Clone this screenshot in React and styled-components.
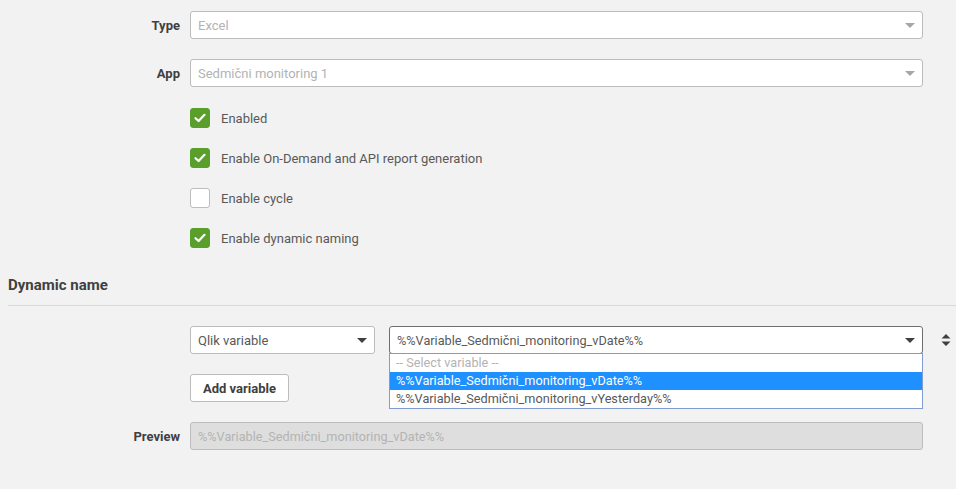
import React from "react";
import styled, { createGlobalStyle } from "styled-components";

const GlobalStyle = createGlobalStyle`
  html, body {
    margin: 0;
    padding: 0;
    background: #f2f2f2;
    font-family: Roboto, "Liberation Sans", Arial, sans-serif;
    color: #595959;
  }
`;

const Page = styled.div`
  width: 956px;
  height: 489px;
  padding-top: 11px;
  box-sizing: border-box;
  overflow: hidden;
`;

const FieldRow = styled.div`
  display: grid;
  grid-template-columns: 180px 1fr 33px;
  align-items: center;
  margin-bottom: ${(p) => p.$gap ?? 20}px;
`;

const Label = styled.div`
  text-align: right;
  font-size: 13px;
  font-weight: bold;
  color: #404040;
`;

const Field = styled.div`
  margin-left: 10px;
  position: relative;
  display: flex;
  gap: 14px;
`;

const SelectBox = styled.div`
  position: relative;
  flex: ${(p) => (p.$width ? `0 0 ${p.$width}px` : "1")};
  height: 28px;
  box-sizing: border-box;
  border: 1px solid ${(p) => (p.$focus ? "#6e6e6e" : "#bcbcbc")};
  border-radius: 3px;
  background: ${(p) => (p.$disabled ? "#dedede" : "#fff")};
  display: flex;
  align-items: center;
  padding: 0 7px;
  font-size: ${(p) => p.$size || 13}px;
  color: ${(p) => (p.$muted ? "#b3b3b3" : "#595959")};
`;

const Caret = styled.span`
  position: absolute;
  right: 7px;
  top: 11px;
  width: 0;
  height: 0;
  border-left: 5px solid transparent;
  border-right: 5px solid transparent;
  border-top: 5px solid ${(p) => (p.$dark ? "#404040" : "#a6a6a6")};
`;

const Options = styled.div`
  position: absolute;
  top: 100%;
  left: -1px;
  right: -1px;
  background: #fff;
  border: 1px solid #7f9bd0;
  font-size: 12.7px;
  z-index: 2;
`;

const Option = styled.div`
  height: 18px;
  line-height: 18px;
  padding: 0 6px;
  color: ${(p) => (p.$active ? "#fff" : p.$placeholder ? "#b3b3b3" : "#595959")};
  background: ${(p) => (p.$active ? "#1e90ff" : "transparent")};
`;

const CheckList = styled.div`
  display: flex;
  flex-direction: column;
  gap: 20px;
  padding-left: 190px;
  margin-top: 21px;
`;

const CheckRow = styled.label`
  display: flex;
  align-items: center;
  gap: 11px;
  font-size: 13px;
  color: #595959;
`;

const Box = styled.span`
  width: 20px;
  height: 20px;
  box-sizing: border-box;
  border-radius: 3px;
  display: flex;
  align-items: center;
  justify-content: center;
  background: ${(p) => (p.$checked ? "#5a9e2c" : "#fff")};
  border: 1px solid ${(p) => (p.$checked ? "#5a9e2c" : "#bcbcbc")};
`;

const Heading = styled.h3`
  margin: 28px 0 0 8px;
  font-size: 15px;
  font-weight: bold;
  color: #404040;
  padding-bottom: 11px;
  border-bottom: 1px solid #d9d9d9;
`;

const DynamicBlock = styled.div`
  margin-top: 20px;
`;

const Button = styled.button`
  height: 28px;
  padding: 0 12px;
  border: 1px solid #bcbcbc;
  border-radius: 3px;
  background: #fff;
  font-family: inherit;
  font-size: 13px;
  font-weight: bold;
  color: #404040;
`;

const SortIcon = styled.div`
  justify-self: center;
  margin-left: 12px;
  display: flex;
`;

const Check = () => (
  <svg width="12" height="10" viewBox="0 0 12 10">
    <path d="M1.5 5.2 L4.6 8 L10.5 1.8" fill="none" stroke="#fff" strokeWidth="2.2" strokeLinecap="round" strokeLinejoin="round" />
  </svg>
);

const checks = [
  { label: "Enabled", checked: true },
  { label: "Enable On-Demand and API report generation", checked: true },
  { label: "Enable cycle", checked: false },
  { label: "Enable dynamic naming", checked: true },
];

export default function App() {
  return (
    <Page>
      <GlobalStyle />
      <FieldRow>
        <Label>Type</Label>
        <Field>
          <SelectBox $muted>
            Excel
            <Caret />
          </SelectBox>
        </Field>
      </FieldRow>
      <FieldRow $gap={0}>
        <Label>App</Label>
        <Field>
          <SelectBox $muted>
            Sedmični monitoring 1
            <Caret />
          </SelectBox>
        </Field>
      </FieldRow>

      <CheckList>
        {checks.map((c) => (
          <CheckRow key={c.label}>
            <Box $checked={c.checked}>{c.checked && <Check />}</Box>
            {c.label}
          </CheckRow>
        ))}
      </CheckList>

      <Heading>Dynamic name</Heading>

      <DynamicBlock>
        <FieldRow>
          <span />
          <Field>
            <SelectBox $width={185}>
              Qlik variable
              <Caret $dark />
            </SelectBox>
            <SelectBox $focus $size={12.7}>
              %%Variable_Sedmični_monitoring_vDate%%
              <Caret $dark />
              <Options>
                <Option $placeholder>-- Select variable --</Option>
                <Option $active>%%Variable_Sedmični_monitoring_vDate%%</Option>
                <Option>%%Variable_Sedmični_monitoring_vYesterday%%</Option>
              </Options>
            </SelectBox>
          </Field>
          <SortIcon>
            <svg width="10" height="12" viewBox="0 0 10 12">
              <path d="M5 0 L9.5 4.5 L0.5 4.5 Z M5 12 L9.5 7.5 L0.5 7.5 Z" fill="#404040" />
            </svg>
          </SortIcon>
        </FieldRow>
        <FieldRow>
          <span />
          <Field>
            <Button>Add variable</Button>
          </Field>
        </FieldRow>
        <FieldRow>
          <Label>Preview</Label>
          <Field>
            <SelectBox $disabled $muted $size={12.7}>
              %%Variable_Sedmični_monitoring_vDate%%
            </SelectBox>
          </Field>
        </FieldRow>
      </DynamicBlock>
    </Page>
  );
}
